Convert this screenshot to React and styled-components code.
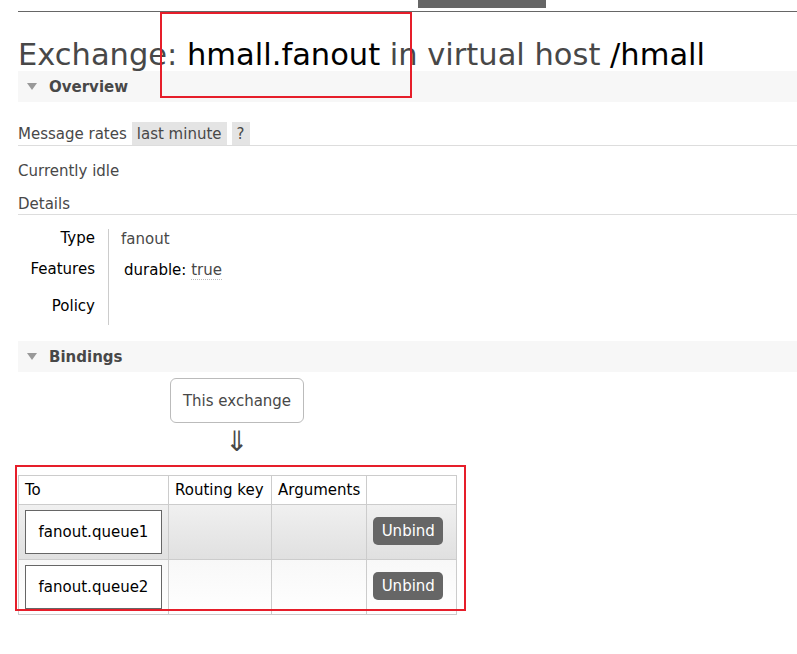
import React from "react";
import styled, { createGlobalStyle } from "styled-components";

const Global = createGlobalStyle`
  html, body { margin: 0; padding: 0; background: #fff; }
  body { font-family: "DejaVu Sans", Verdana, sans-serif; font-size: 15px; color: #484848; }
  * { box-sizing: border-box; }
`;

const Page = styled.div`
  position: relative;
  width: 797px;
  height: 654px;
  padding-left: 18px;
  overflow: hidden;
`;

const TopBar = styled.div`
  height: 12px;
  border-bottom: 1px solid #666;
`;

const ActiveTab = styled.div`
  margin-left: 400px;
  width: 128px;
  height: 8px;
  background: #666;
`;

const Title = styled.h1`
  margin: 0;
  height: 59px;
  padding-top: 26px;
  font-size: 30.5px;
  line-height: 34px;
  font-weight: normal;
  color: #484848;
  white-space: nowrap;
`;

const Strong = styled.span`
  color: #000;
`;

const SectionHeader = styled.div`
  display: flex;
  align-items: center;
  gap: 12px;
  height: 31px;
  margin-top: ${(p) => p.$mt || 0}px;
  padding-left: 9px;
  background: #f7f7f7;
  font-weight: bold;
  font-size: 15px;
  color: #484848;
`;

const Triangle = styled.span`
  width: 0;
  height: 0;
  border-left: 5px solid transparent;
  border-right: 5px solid transparent;
  border-top: 7px solid #999;
`;

const RatesRow = styled.div`
  display: flex;
  align-items: center;
  gap: 5px;
  margin-top: 20px;
  height: 24px;
  border-bottom: 1px solid #ddd;
`;

const Chip = styled.span`
  display: inline-flex;
  align-items: center;
  height: 23px;
  padding: 0 5px;
  background: #e4e4e4;
  color: #484848;
`;

const Plain = styled.div`
  margin-top: ${(p) => p.$mt || 0}px;
  height: ${(p) => p.$h || 20}px;
  line-height: ${(p) => p.$h || 20}px;
  border-bottom: ${(p) => (p.$line ? "1px solid #ddd" : "none")};
`;

const Facts = styled.div`
  display: grid;
  grid-template-columns: 90px 1fr;
  margin-top: 14px;
  width: 300px;
`;

const FactLabel = styled.div`
  text-align: right;
  color: #000;
  padding-right: 13px;
  height: ${(p) => p.$h}px;
  padding-top: ${(p) => p.$pt}px;
`;

const FactValue = styled.div`
  border-left: 1px solid #ccc;
  padding-left: ${(p) => p.$pl}px;
  height: ${(p) => p.$h}px;
  padding-top: ${(p) => p.$pt}px;
`;

const Dotted = styled.span`
  border-bottom: 1px dotted #bbb;
  color: #484848;
`;

const Black = styled.span`
  color: #000;
`;

const ExchangeBox = styled.div`
  margin-left: 152px;
  margin-top: 6px;
  width: 134px;
  height: 45px;
  border: 1px solid #bbb;
  border-radius: 6px;
  display: flex;
  align-items: center;
  justify-content: center;
  color: #484848;
`;

const Arrow = styled.div`
  width: 134px;
  margin-left: 152px;
  padding-top: 4px;
  text-align: center;
  font-size: 28px;
  line-height: 30px;
  color: #484848;
`;

const Table = styled.table`
  margin-top: 18px;
  border-collapse: collapse;
  color: #000;
`;

const Th = styled.th`
  font-weight: normal;
  text-align: left;
  border: 1px solid #ccc;
  height: 29px;
  padding: 0 6px;
  width: ${(p) => p.$w}px;
  background: #fff;
`;

const Tr = styled.tr`
  background: ${(p) =>
    p.$alt
      ? "linear-gradient(#f8f8f8, #fff)"
      : "linear-gradient(#f0f0f0, #e0e0e0)"};
`;

const Td = styled.td`
  border: 1px solid #ccc;
  height: 55px;
  padding: 0 6px;
`;

const QueueBox = styled.div`
  width: 137px;
  height: 44px;
  border: 1px solid #666;
  background: #fff;
  display: flex;
  align-items: center;
  justify-content: center;
  color: #000;
`;

const UnbindButton = styled.button`
  font-family: inherit;
  font-size: 15px;
  width: 70px;
  height: 28px;
  margin-top: -2px;
  border: none;
  border-radius: 5px;
  background: #666;
  color: #fff;
  padding: 0;
`;

const Mark = styled.div`
  position: absolute;
  border: 2px solid #e61e2a;
  left: ${(p) => p.$x}px;
  top: ${(p) => p.$y}px;
  width: ${(p) => p.$w}px;
  height: ${(p) => p.$h}px;
`;

export default function App() {
  return (
    <>
      <Global />
      <Page>
        <TopBar>
          <ActiveTab />
        </TopBar>
        <Title>
          Exchange: <Strong>hmall.fanout</Strong> in virtual host <Strong>/hmall</Strong>
        </Title>
        <SectionHeader>
          <Triangle />
          Overview
        </SectionHeader>
        <RatesRow>
          Message rates
          <Chip>last minute</Chip>
          <Chip>?</Chip>
        </RatesRow>
        <Plain $mt={15} $h={20}>Currently idle</Plain>
        <Plain $mt={12} $h={22} $line>Details</Plain>
        <Facts>
          <FactLabel $h={31} $pt={0}>Type</FactLabel>
          <FactValue $h={31} $pt={1} $pl={12}>fanout</FactValue>
          <FactLabel $h={37} $pt={0}>Features</FactLabel>
          <FactValue $h={37} $pt={1} $pl={15}>
            <Black>durable:</Black> <Dotted>true</Dotted>
          </FactValue>
          <FactLabel $h={28} $pt={0}>Policy</FactLabel>
          <FactValue $h={28} $pt={0} $pl={12} />
        </Facts>
        <SectionHeader $mt={16}>
          <Triangle />
          Bindings
        </SectionHeader>
        <ExchangeBox>This exchange</ExchangeBox>
        <Arrow>⇓</Arrow>
        <Table>
          <thead>
            <tr>
              <Th $w={150}>To</Th>
              <Th $w={103}>Routing key</Th>
              <Th $w={95}>Arguments</Th>
              <Th $w={90}></Th>
            </tr>
          </thead>
          <tbody>
            {["fanout.queue1", "fanout.queue2"].map((q, i) => (
              <Tr key={q} $alt={i === 1}>
                <Td>
                  <QueueBox>{q}</QueueBox>
                </Td>
                <Td />
                <Td />
                <Td>
                  <UnbindButton>Unbind</UnbindButton>
                </Td>
              </Tr>
            ))}
          </tbody>
        </Table>
        <Mark $x={160} $y={12} $w={252} $h={86} />
        <Mark $x={15} $y={465} $w={451} $h={146} />
      </Page>
    </>
  );
}
